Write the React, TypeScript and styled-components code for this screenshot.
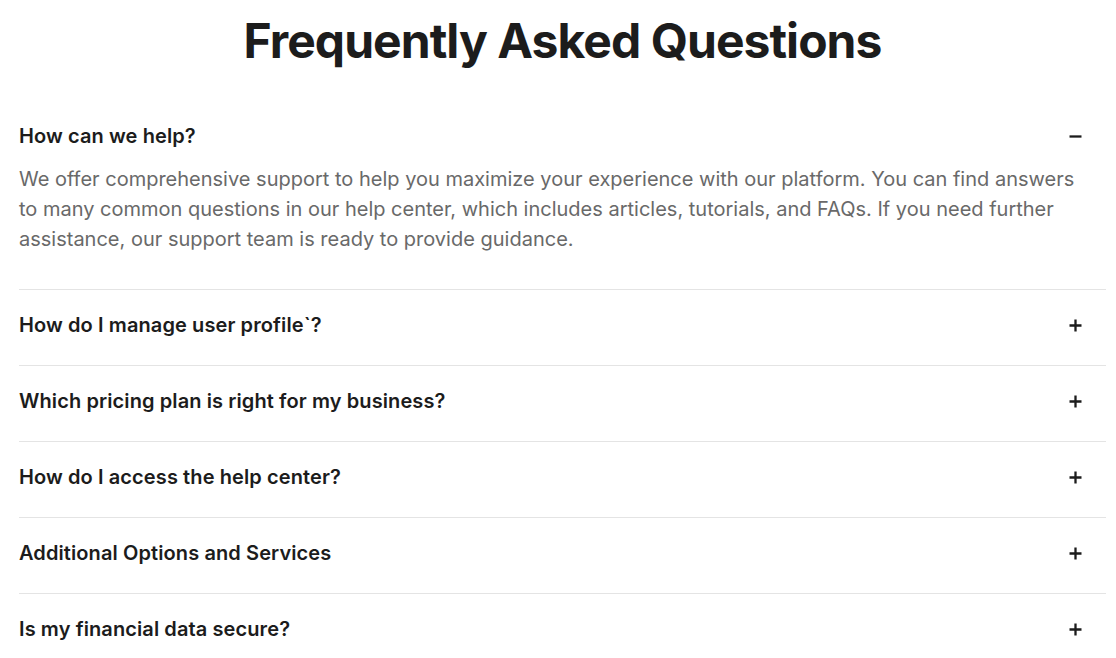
import React, { useState } from "react";
import styled, { createGlobalStyle } from "styled-components";

const Global = createGlobalStyle`
  html, body { margin: 0; padding: 0; background: #ffffff; }
  body { font-family: Inter, "Noto Sans", sans-serif; color: #1c1c1c; }
  * { box-sizing: border-box; }
`;

const Page = styled.main`
  padding: 9px 10px 0 19px;
`;

const Title = styled.h1`
  margin: 0 0 28px;
  text-align: center;
  font-family: Inter, sans-serif;
  font-weight: 700;
  font-size: 48px;
  line-height: 64px;
  letter-spacing: -0.02em;
  color: #1c1c1c;
`;

const List = styled.div`
  display: flex;
  flex-direction: column;
`;

const Item = styled.div<{ $first: boolean }>`
  border-top: ${(p) => (p.$first ? "none" : "1px solid #e4e4e4")};
`;

const Header = styled.button<{ $open: boolean }>`
  width: 100%;
  display: flex;
  align-items: center;
  justify-content: space-between;
  background: none;
  border: none;
  margin: 0;
  padding: 21px 0 ${(p) => (p.$open ? "14px" : "26px")};
  cursor: pointer;
  text-align: left;
  font-family: Inter, sans-serif;
  font-size: 20px;
  line-height: 28px;
  font-weight: 600;
  letter-spacing: 0.1px;
  color: #1c1c1c;
`;

const IconBox = styled.span`
  display: flex;
  align-items: center;
  justify-content: center;
  width: 24px;
  height: 24px;
  margin-right: 19px;
  color: #1c1c1c;
`;

const Body = styled.p`
  margin: 0;
  padding: 0 20px 35px 0;
  font-family: Inter, sans-serif;
  font-size: 20px;
  line-height: 30px;
  font-weight: 400;
  color: #696969;
`;

const Plus = () => (
  <svg width="13" height="13" viewBox="0 0 13 13" fill="none">
    <path d="M6.5 0.5v12M0.5 6.5h12" stroke="currentColor" strokeWidth="2.3" />
  </svg>
);

const Minus = () => (
  <svg width="13" height="13" viewBox="0 0 13 13" fill="none">
    <path d="M0.5 6.5h12" stroke="currentColor" strokeWidth="2.3" />
  </svg>
);

const faqs = [
  {
    q: "How can we help?",
    a: "We offer comprehensive support to help you maximize your experience with our platform. You can find answers to many common questions in our help center, which includes articles, tutorials, and FAQs. If you need further assistance, our support team is ready to provide guidance.",
  },
  { q: "How do I manage user profile`?", a: "You can manage your user profile from the account settings page." },
  { q: "Which pricing plan is right for my business?", a: "Compare our plans to find the one that fits your needs." },
  { q: "How do I access the help center?", a: "The help center is available from the main menu." },
  { q: "Additional Options and Services", a: "We offer a range of additional options and services." },
  { q: "Is my financial data secure?", a: "Yes, we use industry-standard encryption to protect your data." },
];

export default function App() {
  const [open, setOpen] = useState<number | null>(0);
  return (
    <>
      <Global />
      <Page>
        <Title>Frequently Asked Questions</Title>
        <List>
          {faqs.map((f, i) => {
            const isOpen = open === i;
            return (
              <Item key={f.q} $first={i === 0}>
                <Header $open={isOpen} onClick={() => setOpen(isOpen ? null : i)}>
                  <span>{f.q}</span>
                  <IconBox>{isOpen ? <Minus /> : <Plus />}</IconBox>
                </Header>
                {isOpen && <Body>{f.a}</Body>}
              </Item>
            );
          })}
        </List>
      </Page>
    </>
  );
}
